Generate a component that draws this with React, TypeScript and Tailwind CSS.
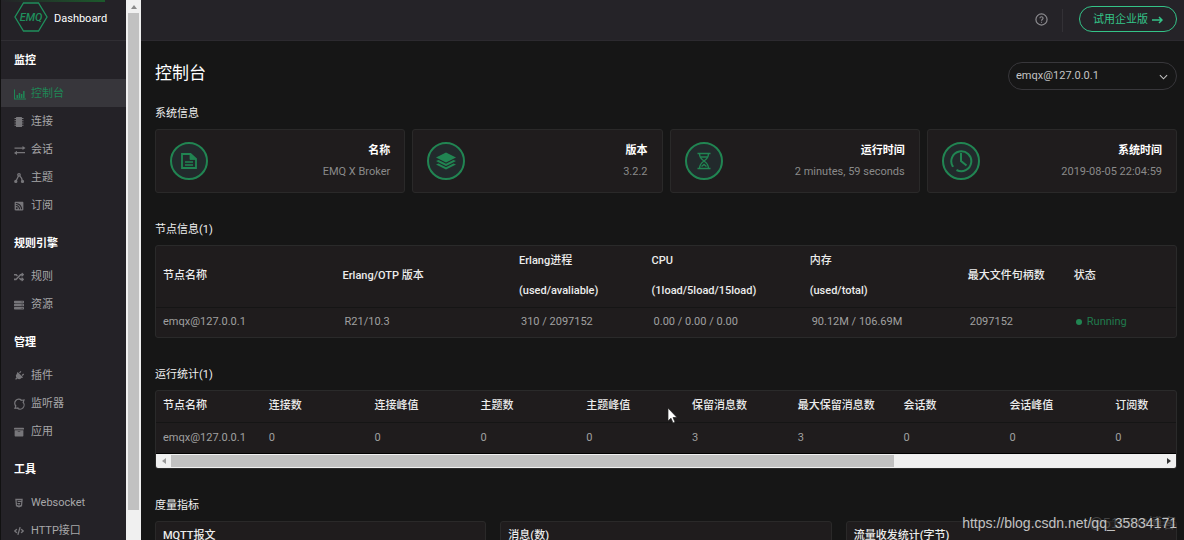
import type { ReactNode } from "react";
import { FaArchive, FaCode, FaHtml5, FaPlug, FaRandom, FaRssSquare, FaServer } from "react-icons/fa";

const ChartIcon = () => (
  <svg viewBox="0 0 12 12" className="w-3 h-3" fill="currentColor">
    <path d="M0 1.500h1v9h11v1H0zM2.500 7H4v3H2.500zM4.700 5h1.500v5H4.700zM6.900 6h1.500v4H6.900zM9.100 3h1.500v7H9.100z" />
  </svg>
);

const ChipIcon = () => (
  <svg viewBox="0 0 12 12" className="w-3 h-3" fill="currentColor">
    <rect x="2" y="1" width="6" height="10" rx="0.500" />
    <path d="M0.500 2h9v1h-9zM0.500 4.200h9v1h-9zM0.500 6.500h9v1h-9zM0.500 8.800h9v1h-9z" />
  </svg>
);

const ExchangeIcon = () => (
  <svg viewBox="0 0 12 12" className="w-3 h-3" fill="currentColor">
    <path d="M0.500 3.500h8V2l3 2-3 2V4.700h-8zM11 8H3V6.800L0 9l3 2V9.200h8z" />
  </svg>
);

const TopicIcon = () => (
  <svg viewBox="0 0 12 12" className="w-3 h-3" fill="none" stroke="currentColor" strokeWidth="1.300">
    <circle cx="5" cy="2.800" r="1.200" />
    <path d="M4.500 4 2 9M5.800 4C7.500 5.500 8 7 8.200 8.500" />
    <circle cx="1.800" cy="9.400" r="1" fill="currentColor" />
    <circle cx="8.500" cy="9.400" r="1" fill="currentColor" />
  </svg>
);

const ListenerIcon = () => (
  <svg viewBox="0 0 12 12" className="w-3 h-3" fill="none" stroke="currentColor" strokeWidth="1.200">
    <path d="M7.500 2.300A4 4 0 0 0 2 8.200M3.200 10A4 4 0 0 0 8.800 4M6.500 2.500l3.500-.5-1 3M4.500 9.800l-3.500.5 1-3" />
  </svg>
);

const FileIcon = () => (
  <svg viewBox="0 0 20 20" className="size-5" fill="none" stroke="currentColor" strokeWidth="1.800">
    <path d="M3 3h8.500l5.500 5v9H3z" />
    <path d="M11 3v5.500h6z" fill="currentColor" strokeWidth="0.800" />
    <path d="M6 11h8M6 14h8" strokeWidth="1.600" />
  </svg>
);

const LayersIcon = () => (
  <svg viewBox="0 0 20 20" className="size-5" fill="currentColor">
    <path d="M10 1.500 20 6.500 10 11.500 0 6.500z" />
    <path d="m0 10 2.500-1L10 12.800 17.500 9l2.500 1-10 5z" />
    <path d="m0 13.500 2.500-1 7.500 3.800 7.500-3.800 2.500 1-10 5z" />
  </svg>
);

const HourglassIcon = () => (
  <svg viewBox="0 0 20 20" className="size-5" fill="none" stroke="currentColor" strokeWidth="1.400">
    <path d="M3.500 2.500h13M3.500 17.500h13M5.500 2.500c0 4 1.500 5.500 4.500 7.500 3-2 4.500-3.500 4.500-7.500M5.500 17.500c0-4 1.500-5.500 4.500-7.500 3 2 4.500 3.500 4.500 7.500" />
    <path d="M7 6h6M7.500 15.500 10 13.500l2.500 2" />
  </svg>
);

const ClockIcon = () => (
  <svg viewBox="0 0 24 24" className="size-6" fill="none" stroke="currentColor" strokeWidth="2">
    <path d="M3.800 17.500A10 10 0 1 1 7.500 21M4.500 16.500l-1.500 1" />
    <path d="M12 4v8l5.500 4.500" />
  </svg>
);

const menu: { title: string; items: { label: string; icon: ReactNode }[] }[] = [
  {
    title: "监控",
    items: [
      { label: "控制台", icon: <ChartIcon /> },
      { label: "连接", icon: <ChipIcon /> },
      { label: "会话", icon: <ExchangeIcon /> },
      { label: "主题", icon: <TopicIcon /> },
      { label: "订阅", icon: <FaRssSquare /> },
    ],
  },
  {
    title: "规则引擎",
    items: [
      { label: "规则", icon: <FaRandom /> },
      { label: "资源", icon: <FaServer /> },
    ],
  },
  {
    title: "管理",
    items: [
      { label: "插件", icon: <FaPlug className="rotate-45" /> },
      { label: "监听器", icon: <ListenerIcon /> },
      { label: "应用", icon: <FaArchive /> },
    ],
  },
  {
    title: "工具",
    items: [
      { label: "Websocket", icon: <FaHtml5 /> },
      { label: "HTTP接口", icon: <FaCode /> },
    ],
  },
];

const infoCards = [
  { title: "名称", value: "EMQ X Broker", icon: <FileIcon /> },
  { title: "版本", value: "3.2.2", icon: <LayersIcon /> },
  { title: "运行时间", value: "2 minutes, 59 seconds", icon: <HourglassIcon /> },
  { title: "系统时间", value: "2019-08-05 22:04:59", icon: <ClockIcon /> },
];

const nodeColumns = [
  { lines: ["节点名称"], value: "emqx@127.0.0.1", width: "w-[17.6%]" },
  { lines: ["Erlang/OTP 版本"], value: "R21/10.3", width: "w-[17.3%]" },
  { lines: ["Erlang进程", "(used/avaliable)"], value: "310 / 2097152", width: "w-[13%]" },
  { lines: ["CPU", "(1load/5load/15load)"], value: "0.00 / 0.00 / 0.00", width: "w-[15.5%]" },
  { lines: ["内存", "(used/total)"], value: "90.12M / 106.69M", width: "w-[15.5%]" },
  { lines: ["最大文件句柄数"], value: "2097152", width: "w-[10.4%]" },
];

const stats = [
  ["节点名称", "emqx@127.0.0.1"],
  ["连接数", "0"],
  ["连接峰值", "0"],
  ["主题数", "0"],
  ["主题峰值", "0"],
  ["保留消息数", "3"],
  ["最大保留消息数", "3"],
  ["会话数", "0"],
  ["会话峰值", "0"],
  ["订阅数", "0"],
];

const metrics = ["MQTT报文", "消息(数)", "流量收发统计(字节)"];

function Sidebar() {
  return (
    <aside className="w-[126px] shrink-0 overflow-hidden border-l border-[#111] bg-[#242227]">
      <div className="relative flex h-[41px] items-start gap-[6px] border-b border-[#302e33] pl-[13px] pt-[2px]">
        <div className="absolute left-0 top-0 h-[2px] w-[104px] bg-linear-to-r from-transparent to-[#1c5a2c]" />
        <svg viewBox="0 0 34 30" className="w-[34px] h-[30px]" fill="none">
          <path d="M9.500 1h15l8.500 14-8.500 14h-15L1 15z" stroke="#1f8f5c" strokeWidth="1.300" />
          <text x="17" y="19" textAnchor="middle" fontSize="11" fontStyle="italic" fontWeight="500" fill="#1f8f5c">
            EMQ
          </text>
        </svg>
        <span className="leading-[34px] text-white">Dashboard</span>
      </div>
      <nav>
        {menu.map((group, i) => (
          <div key={group.title} className={i > 0 ? "mt-[5px]" : ""}>
            <h2 className="pb-[9px] pl-[13px] pt-[11px] font-bold leading-[18px] text-white">{group.title}</h2>
            <ul>
              {group.items.map((item) => (
                <li key={item.label}>
                  <a
                    href="#"
                    className={
                      item.label === "控制台"
                        ? "flex h-7 items-center gap-[5px] bg-[#37363b] pl-[13px] pt-[2px] text-[#1f8656]"
                        : "flex h-7 items-center gap-[5px] pl-[13px] pt-[2px] text-[#a7a7a9]"
                    }
                  >
                    <span className={item.label === "控制台" ? "w-3 text-[10px]" : "w-3 text-[10px] text-[#77767a]"}>
                      {item.icon}
                    </span>
                    {item.label}
                  </a>
                </li>
              ))}
            </ul>
          </div>
        ))}
      </nav>
    </aside>
  );
}

function SideScrollbar() {
  return (
    <div className="flex w-[15px] shrink-0 flex-col items-center bg-[#f0f0f0]">
      <div className="flex h-[13px] items-center">
        <svg viewBox="0 0 6 4" className="w-[6px] h-1" fill="#8a8a8a">
          <path d="M3 0 6 4H0z" />
        </svg>
      </div>
      <div className="h-[92%] w-[11px] bg-[#c1c1c1]" />
    </div>
  );
}

function TableScrollbar() {
  return (
    <div className="flex h-[14px] items-center bg-[#f0f0f0]">
      <div className="flex w-[15px] justify-center">
        <svg viewBox="0 0 4 6" className="w-1 h-[6px]" fill="#9a9a9a">
          <path d="M0 3 4 0v6z" />
        </svg>
      </div>
      <div className="flex-1">
        <div className="h-3 w-[73%] bg-[#c1c1c1]" />
      </div>
      <div className="flex w-[15px] justify-center">
        <svg viewBox="0 0 4 6" className="w-1 h-[6px]" fill="#333">
          <path d="M4 3 0 0v6z" />
        </svg>
      </div>
    </div>
  );
}

function Topbar() {
  return (
    <header className="flex h-[41px] items-start justify-end border-b border-[#2c2a2f] bg-[#252328] pr-[7px] pt-[6px]">
      <button aria-label="帮助" className="mt-[7px] text-[#8c8b8f]">
        <svg viewBox="0 0 14 14" className="size-[13px]" fill="none" stroke="currentColor">
          <circle cx="7" cy="7" r="6" strokeWidth="1.300" />
          <path d="M5.300 5.700c0-2.200 3.400-2.200 3.400 0C8.700 7 7 6.900 7 8.300M7 9.300v1.200" strokeWidth="1.200" />
        </svg>
      </button>
      <div className="ml-[14px] mr-4 mt-[3px] h-[23px] w-px bg-[#333136]" />
      <button className="flex h-[26px] w-[98px] items-center justify-center gap-1 rounded-full border border-[#34c388] pt-[2px] text-[#34c388]">
        试用企业版
        <svg viewBox="0 0 11 8" className="w-[11px] h-2" fill="none" stroke="currentColor" strokeWidth="1.500">
          <path d="M0 4h10M7 1l3 3-3 3" />
        </svg>
      </button>
    </header>
  );
}

export default function App() {
  return (
    <div className="relative flex h-screen overflow-hidden bg-[#161616] font-['Roboto','Noto_Sans_CJK_SC',sans-serif] text-[11px] leading-[18px] text-[#a0a0a0]">
      <Sidebar />
      <SideScrollbar />
      <div className="min-w-0 flex-1">
        <Topbar />
        <main className="pl-[14px] pr-[7px] pt-[21px]">
          <div className="flex items-start justify-between">
            <h1 className="text-[17px] leading-[22px] text-white">控制台</h1>
            <div className="relative">
              <select
                aria-label="节点"
                className="block h-7 w-[169px] appearance-none rounded-full border border-[#38373b] bg-transparent px-[7px] text-[#c4c4c4]"
              >
                <option>emqx@127.0.0.1</option>
              </select>
              <svg
                viewBox="0 0 10 6"
                className="pointer-events-none absolute right-[9px] top-[12px] w-[9px] h-[6px]"
                fill="none"
                stroke="#c4c4c4"
                strokeWidth="1.200"
              >
                <path d="m1 1 4 4 4-4" />
              </svg>
            </div>
          </div>

          <h2 className="mt-[15px] text-[#f0f0f0]">系统信息</h2>
          <div className="mt-[6px] grid grid-cols-4 gap-[7px]">
            {infoCards.map((card) => (
              <div
                key={card.title}
                className="flex h-16 items-center justify-between rounded-[3px] border border-[#2a2929] bg-[#1f1c1d] px-[14px]"
              >
                <div className="flex size-[38px] items-center justify-center rounded-full border-2 border-[#218552] bg-[#222a2c] text-[#218552]">
                  {card.icon}
                </div>
                <div className="text-right">
                  <h3 className="mb-[3px] font-bold text-white">{card.title}</h3>
                  <p className="text-[#8a8a8a]">{card.value}</p>
                </div>
              </div>
            ))}
          </div>

          <h2 className="mt-[28px] text-[#f0f0f0]">节点信息(1)</h2>
          <div className="mt-[6px] overflow-hidden rounded-[3px] border border-[#2a2a2a] bg-[#1f1c1d]">
            <table className="w-full table-fixed text-left">
              <thead>
                <tr className="h-[61px] border-b border-[#151515] text-[#ececec]">
                  {nodeColumns.map((col) => (
                    <th key={col.lines[0]} className={`${col.width} whitespace-nowrap pl-[7px] font-medium leading-[30px]`}>
                      {col.lines.map((line) => (
                        <div key={line}>{line}</div>
                      ))}
                    </th>
                  ))}
                  <th className="pl-[7px] font-medium">状态</th>
                </tr>
              </thead>
              <tbody>
                <tr className="h-[30px]">
                  {nodeColumns.map((col, i) => (
                    <td key={col.value} className={i === 0 ? "whitespace-nowrap pl-[7px]" : "whitespace-nowrap pl-[9px]"}>
                      {col.value}
                    </td>
                  ))}
                  <td className="pl-[9px] text-[#1f7a4c]">
                    <span className="mr-[5px] inline-block size-[6px] rounded-full bg-[#218552]" />
                    Running
                  </td>
                </tr>
              </tbody>
            </table>
          </div>

          <h2 className="mt-[28px] text-[#f0f0f0]">运行统计(1)</h2>
          <div className="mt-[6px] overflow-hidden rounded-[3px] border border-[#2a2a2a] bg-[#1f1c1d]">
            <div className="overflow-hidden">
              <table className="w-[1058px] table-fixed text-left">
                <thead>
                  <tr className="h-[31px] border-b border-[#151515] text-[#ececec]">
                    {stats.map(([name]) => (
                      <th key={name} className="whitespace-nowrap pl-[7px] font-medium">{name}</th>
                    ))}
                  </tr>
                </thead>
                <tbody>
                  <tr className="h-[31px] border-b border-black">
                    {stats.map(([name, value]) => (
                      <td key={name} className="pl-[7px]">{value}</td>
                    ))}
                  </tr>
                </tbody>
              </table>
            </div>
            <TableScrollbar />
          </div>

          <h2 className="mt-[28px] text-[#f0f0f0]">度量指标</h2>
          <div className="mt-[6px] grid grid-cols-3 gap-[14px]">
            {metrics.map((name) => (
              <div key={name} className="h-40 rounded-[3px] border border-[#2a2929] bg-[#1f1c1d] px-[7px] py-[5px]">
                <h3 className="font-medium text-[#ececec]">{name}</h3>
              </div>
            ))}
          </div>
        </main>
      </div>

      <svg viewBox="0 0 11 17" className="pointer-events-none absolute left-[667px] top-[407px] w-[11px] h-[17px]">
        <path d="M1 1v13l3-2.800 2 4.800 2-1-2-4.500h4z" fill="#fff" stroke="#222" strokeWidth="0.700" />
      </svg>
      <span className="absolute bottom-[8px] right-[8px] font-['Liberation_Sans','Noto_Sans_CJK_SC',sans-serif] text-[14px] text-[#444]">
        @51CTO博客
      </span>
      <span className="absolute bottom-[8px] right-[7px] font-['Liberation_Sans',sans-serif] text-[14px] text-[#c2c2c2]">
        https://blog.csdn.net/qq_35834171
      </span>
    </div>
  );
}
